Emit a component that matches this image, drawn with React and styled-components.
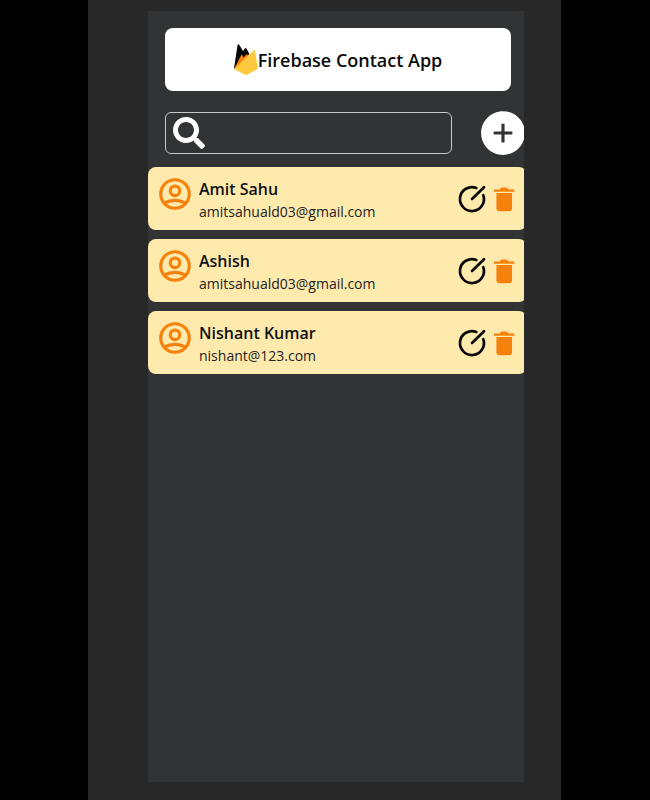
import React, { useState } from "react";
import styled, { createGlobalStyle } from "styled-components";
import { FaSearch } from "react-icons/fa";
import { AiFillPlusCircle } from "react-icons/ai";
import { HiOutlineUserCircle } from "react-icons/hi";

const GlobalStyle = createGlobalStyle`
  *, *::before, *::after { box-sizing: border-box; }
  body {
    margin: 0;
    background: #000;
    font-family: "Open Sans", "Noto Sans", sans-serif;
  }
  svg { display: block; flex-shrink: 0; }
`;

const Page = styled.div`
  display: flex;
  min-height: 100vh;
  padding: 0 89px 0 88px;
`;

const Backdrop = styled.div`
  flex: 1;
  min-width: 0;
  display: flex;
  padding: 11px 37px 18px 60px;
  background: #282828;
`;

const Screen = styled.main`
  flex: 1;
  min-width: 0;
  overflow: hidden;
  background: #323335;
`;

const Header = styled.header`
  display: flex;
  align-items: center;
  justify-content: center;
  height: 63px;
  margin: 17px 13px 0 17px;
  border-radius: 8px;
  background: #fff;
`;

const Title = styled.h1`
  margin: 0;
  font-size: 18px;
  line-height: 28px;
  font-weight: 600;
  color: #0b0b0b;
  white-space: nowrap;
`;

const Toolbar = styled.form`
  display: flex;
  align-items: center;
  justify-content: space-between;
  gap: 26px;
  margin: 17px -4px 0 17px;
`;

const SearchBox = styled.label`
  flex: 1;
  min-width: 0;
  display: flex;
  align-items: center;
  gap: 8px;
  height: 42px;
  padding: 0 7px;
  border: 1px solid #c8c8c8;
  border-radius: 6px;
  color: #fff;
`;

const SearchInput = styled.input`
  flex: 1;
  min-width: 0;
  padding: 0;
  border: 0;
  outline: 0;
  background: transparent;
  color: #fff;
  font: inherit;
  font-size: 16px;
`;

const IconButton = styled.button`
  padding: 0;
  border: 0;
  background: none;
  color: ${(p) => p.$color};
  cursor: pointer;
`;

const ContactList = styled.ul`
  display: grid;
  gap: 9px;
  margin: 9px -3px 0 0;
  padding: 0;
  list-style: none;
`;

const ContactCard = styled.li`
  display: flex;
  align-items: center;
  height: 63px;
  padding: 0 7px 0 8px;
  border-radius: 8px;
  background: #ffeaae;
`;

const Avatar = styled.span`
  align-self: flex-start;
  margin: 8px 5px 0 0;
  color: #f6820c;
`;

const Details = styled.div`
  flex: 1;
  min-width: 0;
  padding-top: 2px;
`;

const Name = styled.h2`
  margin: 0;
  font-size: 16px;
  line-height: 24px;
  font-weight: 600;
  color: #111;
`;

const Email = styled.p`
  margin: 0;
  font-size: 14px;
  line-height: 22px;
  color: #222;
`;

const Actions = styled.div`
  display: flex;
  align-items: center;
`;

const contacts = [
  { id: 1, name: "Amit Sahu", email: "amitsahuald03@gmail.com" },
  { id: 2, name: "Ashish", email: "amitsahuald03@gmail.com" },
  { id: 3, name: "Nishant Kumar", email: "nishant@123.com" },
];

function FirebaseLogo() {
  return (
    <svg width="24" height="32" viewBox="0 0 24 32" aria-hidden="true">
      <path d="M0 24.5 3.6.7Q4.3-.4 5.2.7L9 7 10.8 4.4Q11.6 3.4 12.4 4.4L15.4 10 1 25Z" fill="#050505" />
      <path d="M.2 24.7 7.7 10.2 9.6 13.6 12.4 10.6 15 11 7 22Z" fill="#f6820c" />
      <path d="M0 25 19.6 6.4Q20.6 5.6 21 6.9L24 24.8 13.4 30.6Q12 31.3 10.6 30.6Z" fill="#fdca3f" />
    </svg>
  );
}

function EditIcon() {
  return (
    <svg
      width="32"
      height="32"
      viewBox="0 0 32 32"
      fill="none"
      stroke="currentColor"
      strokeWidth="2.7"
      strokeLinecap="round"
      aria-hidden="true"
    >
      <path d="M20.3 4.9A12 12 0 1 0 27.3 12.2" />
      <path d="M16 16 28 4.2" />
    </svg>
  );
}

function TrashIcon() {
  return (
    <svg width="32" height="32" viewBox="0 0 32 32" fill="currentColor" aria-hidden="true">
      <path d="M6 6.4H11.8L13 4.9Q13.4 4.4 14 4.4H18.4Q19 4.4 19.4 4.9L20.6 6.4H26.4V8.7H6Z" />
      <path d="M8.4 10H24V25.2Q24 28.2 21 28.2H11.4Q8.4 28.2 8.4 25.2Z" />
    </svg>
  );
}

export default function App() {
  const [query, setQuery] = useState("");
  const shown = contacts.filter((c) => c.name.toLowerCase().includes(query.toLowerCase()));

  return (
    <>
      <GlobalStyle />
      <Page>
        <Backdrop>
          <Screen>
            <Header>
              <FirebaseLogo />
              <Title>Firebase Contact App</Title>
            </Header>
            <Toolbar onSubmit={(e) => e.preventDefault()}>
              <SearchBox>
                <FaSearch size={32} aria-hidden="true" />
                <SearchInput
                  type="text"
                  aria-label="Search contacts"
                  value={query}
                  onChange={(e) => setQuery(e.target.value)}
                />
              </SearchBox>
              <IconButton type="button" $color="#fff" aria-label="Add contact">
                <AiFillPlusCircle size={50} />
              </IconButton>
            </Toolbar>
            <ContactList>
              {shown.map((c) => (
                <ContactCard key={c.id}>
                  <Avatar>
                    <HiOutlineUserCircle size={38} aria-hidden="true" />
                  </Avatar>
                  <Details>
                    <Name>{c.name}</Name>
                    <Email>{c.email}</Email>
                  </Details>
                  <Actions>
                    <IconButton type="button" $color="#0b0b0b" aria-label={`Edit ${c.name}`}>
                      <EditIcon />
                    </IconButton>
                    <IconButton type="button" $color="#f6820c" aria-label={`Delete ${c.name}`}>
                      <TrashIcon />
                    </IconButton>
                  </Actions>
                </ContactCard>
              ))}
            </ContactList>
          </Screen>
        </Backdrop>
      </Page>
    </>
  );
}
